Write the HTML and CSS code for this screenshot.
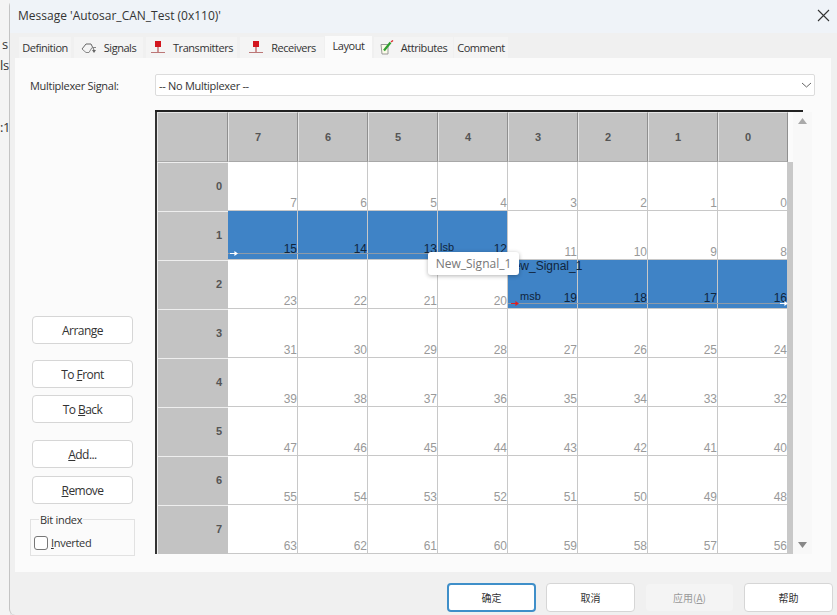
FILE: index.html
```html
<!DOCTYPE html>
<html lang="en">
<head>
    <meta charset="UTF-8">
    <title>Message 'Autosar_CAN_Test (0x110)'</title>
    <link rel="stylesheet" href="styles.css">
</head>
<body>
    <div class="behind">
        <span class="behind-a">s</span>
        <span class="behind-b">ls</span>
        <span class="behind-c">:1</span>
    </div>

    <div class="window">
        <div class="titlebar">
            <span class="title">Message 'Autosar_CAN_Test (0x110)'</span>
            <svg class="close" width="13" height="13" viewBox="0 0 13 13"><path d="M1 1l11 11M12 1L1 12" stroke="#333" stroke-width="1.1" fill="none"/></svg>
        </div>

        <div class="tabs">
            <div class="tab tab-definition">Definition</div>
            <div class="tab tab-signals">
                <svg width="16" height="12" viewBox="0 0 16 12"><path d="M1 7l4-5h5l3 6" stroke="#666" fill="none"/><path d="M1 7l4 3.5h3l3-5h4" stroke="#888" fill="none"/><path d="M11 8h4l-2 3z" fill="#666"/></svg>
                Signals
            </div>
            <div class="tab tab-transmitters">
                <svg width="16" height="13" viewBox="0 0 16 13"><rect x="5" y="0" width="6" height="6" fill="#d3161e"/><path d="M8 6v5" stroke="#a33" fill="none"/><path d="M1 11.5h14" stroke="#b77" fill="none"/></svg>
                Transmitters
            </div>
            <div class="tab tab-receivers">
                <svg width="16" height="13" viewBox="0 0 16 13"><rect x="5" y="0" width="6" height="6" fill="#d3161e"/><path d="M8 6v5" stroke="#a33" fill="none"/><path d="M1 11.5h14" stroke="#b77" fill="none"/></svg>
                Receivers
            </div>
            <div class="tab tab-layout active">Layout</div>
            <div class="tab tab-attributes">
                <svg width="14" height="15" viewBox="0 0 14 15"><path d="M1 4.5h7V14H2z" fill="#fbfbe8" stroke="#999"/><path d="M4 10.5l6.5-8" stroke="#2f9e2f" stroke-width="2.2" fill="none"/><path d="M11 2l2-1.5" stroke="#d33" stroke-width="1.5"/></svg>
                Attributes
            </div>
            <div class="tab tab-comment">Comment</div>
        </div>

        <div class="page">
            <div class="mux-row">
                <label class="mux-label">Multiplexer Signal:</label>
                <div class="combo">
                    <span>-- No Multiplexer --</span>
                    <svg width="11" height="6" viewBox="0 0 11 6"><path d="M1 1l4.5 4L10 1" stroke="#666" fill="none"/></svg>
                </div>
            </div>

            <div class="main">
                <div class="side">
                    <button class="btn btn-arrange">Arrange</button>
                    <button class="btn btn-front">To <u>F</u>ront</button>
                    <button class="btn btn-back">To <u>B</u>ack</button>
                    <button class="btn btn-add"><u>A</u>dd...</button>
                    <button class="btn btn-remove"><u>R</u>emove</button>
                    <fieldset class="bit-index">
                        <legend>Bit index</legend>
                        <label class="check"><span class="box"></span><span><u>I</u>nverted</span></label>
                    </fieldset>
                </div>

                <div class="grid-area">
                    <div class="top-line"></div>
                    <div class="grid-row">
                        <div class="grid" id="grid"></div>
                        <div class="strip"></div>
                        <div class="scrollbar">
                            <svg width="9" height="6" viewBox="0 0 9 6"><path d="M4.5 0L9 6H0z" fill="#aaa"/></svg>
                            <svg width="9" height="6" viewBox="0 0 9 6"><path d="M4.5 6L9 0H0z" fill="#888"/></svg>
                        </div>
                    </div>
                    <div class="tooltip">New_Signal_1</div>
                </div>
            </div>
        </div>

        <div class="footer">
            <button class="dlg dlg-default">确定</button>
            <button class="dlg">取消</button>
            <button class="dlg dlg-disabled">应用(<u>A</u>)</button>
            <button class="dlg">帮助</button>
        </div>
    </div>

    <script>
        // 8x8 bit table, header row first
        const grid = document.getElementById('grid');
        let html = '<div class="head corner"></div>';
        for (let c = 7; c >= 0; c--) {
            html += `<div class="head">${c}</div>`;
        }
        for (let r = 0; r < 8; r++) {
            html += `<div class="row-head">${r}</div>`;
            for (let c = 7; c >= 0; c--) {
                const bit = r * 8 + c;
                const on = bit >= 12 && bit <= 19;
                let extra = '';
                if (bit === 12) extra = '<span class="tag tag-lsb">lsb</span>';
                if (bit === 19) extra = '<span class="tag tag-name">New_Signal_1</span><span class="tag tag-msb">msb</span>';
                html += `<div class="cell${on ? ' on' : ''}">${extra}<span class="num">${bit}</span></div>`;
            }
        }
        grid.innerHTML = html;

        // signal lines with their start and end arrows
        const cells = grid.querySelectorAll('.cell');
        const line = (bit, cls) => {
            const el = document.createElement('div');
            el.className = cls;
            cells[(Math.floor(bit / 8)) * 8 + 7 - bit % 8].appendChild(el);
        };
        line(15, 'sig-line sig-line-a');
        line(19, 'sig-line sig-line-b');
    </script>
</body>
</html>
```

FILE: styles.css
```css
* {
    box-sizing: border-box;
}
html, body {
    height: 100%;
}
body {
    margin: 0;
    background-color: #e9e9e9;
    font-family: "Open Sans", "Noto Sans", sans-serif;
    font-size: 11px;
    letter-spacing: -0.3px;
    color: #333;
    overflow: hidden;
}
.behind {
    position: absolute;
    left: 0;
    top: 0;
    width: 10px;
    height: 615px;
    background-color: #f4f4f4;
    font-size: 13px;
}
.behind span {
    position: absolute;
}
.behind-a {
    left: 2px;
    top: 35px;
}
.behind-b {
    left: 0;
    top: 56px;
}
.behind-c {
    left: 0;
    top: 118px;
}
.window {
    position: absolute;
    left: 9px;
    top: 0;
    right: 0;
    bottom: 0;
    display: flex;
    flex-direction: column;
    background-color: #f0f0f0;
    border-left: 1px solid #c4c4c4;
    border-bottom-left-radius: 6px;
    border-top-left-radius: 6px;
}
.titlebar {
    height: 33px;
    flex: none;
    display: flex;
    align-items: center;
    justify-content: space-between;
    padding: 0 7px 3px 8px;
    background-color: #eff3f8;
}
.title {
    font-size: 12px;
    letter-spacing: 0;
}
.tabs {
    height: 25px;
    flex: none;
    display: flex;
    align-items: flex-end;
    padding-left: 9px;
    letter-spacing: -0.45px;
}
.tab {
    height: 21px;
    display: flex;
    align-items: center;
    gap: 7px;
    justify-content: center;
    background-color: #f4f4f4;
    white-space: nowrap;
}
.tab-definition { width: 52px; }
.tab-signals { width: 69px; margin-left: 3px; }
.tab-transmitters { width: 91px; margin-left: 3px; }
.tab-receivers { width: 84px; margin-left: 3px; }
.tab-layout { width: 47px; margin-left: 1px; }
.tab-attributes { width: 79px; margin-left: 2px; }
.tab-comment { width: 54px; margin-left: 1px; }
.tab.active {
    height: 22px;
    background-color: #fbfbfb;
    padding-bottom: 3px;
}
.page {
    height: 514px;
    flex: none;
    margin: 0 6px 0 5px;
    padding: 16px 0 0 15px;
    background-color: #fbfbfb;
    display: flex;
    flex-direction: column;
}
.mux-row {
    height: 22px;
    display: flex;
    align-items: center;
}
.mux-label {
    width: 125px;
}
.combo {
    width: 660px;
    height: 22px;
    display: flex;
    align-items: center;
    justify-content: space-between;
    padding: 0 2px 0 3px;
    background-color: #fff;
    border: 1px solid #dcdcdc;
    border-radius: 2px;
}
.main {
    margin-top: 14px;
    display: flex;
}
.side {
    width: 125px;
    height: 446px;
    padding-left: 2px;
    padding-top: 206px;
    display: flex;
    flex-direction: column;
    align-items: flex-start;
}
.btn {
    width: 101px;
    height: 28px;
    padding: 0;
    font: inherit;
    font-size: 12px;
    letter-spacing: -0.55px;
    color: #333;
    background-color: #fff;
    border: 1px solid #d6d6d6;
    border-radius: 4px;
}
.btn-front {
    margin-top: 16px;
}
.btn-back {
    margin-top: 7px;
}
.btn-add {
    margin-top: 17px;
}
.btn-remove {
    margin-top: 8px;
}
.bit-index {
    width: 105px;
    height: 44px;
    margin: 8px 0 0 -2px;
    padding: 0 0 0 3px;
    border: 1px solid #e2e2e2;
}
.bit-index legend {
    padding: 0 1px;
    margin-left: 5px;
}
.check {
    display: flex;
    align-items: center;
    gap: 3px;
    margin-top: 8px;
}
.box {
    width: 14px;
    height: 14px;
    background-color: #fff;
    border: 1px solid #777;
    border-radius: 3px;
}
.grid-area {
    position: relative;
    width: 660px;
}
.top-line {
    width: 648px;
    height: 2px;
    background-color: #222;
}
.grid-row {
    display: flex;
    height: 442px;
    border-left: 2px solid #333;
    width: 657px;
}
.grid {
    display: grid;
    grid-template-columns: 71px repeat(8, 70px);
    grid-template-rows: 50px repeat(8, 49px);
    width: 631px;
    background-color: #fff;
    letter-spacing: 0;
}
.head {
    display: flex;
    align-items: center;
    justify-content: center;
    padding: 0 10px 0 0;
    background-color: #c3c3c3;
    border: 1px solid #e6e6e6;
    border-right-color: #8f8f8f;
    border-bottom-color: #a8a8a8;
    color: #555;
    font-family: "Liberation Sans", sans-serif;
    font-size: 11px;
    font-weight: bold;
}
.row-head {
    display: flex;
    align-items: center;
    justify-content: flex-end;
    padding: 0 6px 2px 0;
    background-color: #c3c3c3;
    border-top: 1px solid #eee;
    border-left: 1px solid #eee;
    color: #555;
    font-family: "Liberation Sans", sans-serif;
    font-size: 11px;
    font-weight: bold;
}
.cell {
    position: relative;
    border-right: 1px solid #c8c8c8;
    border-bottom: 1px solid #c8c8c8;
    font-family: "Liberation Sans", sans-serif;
    font-size: 12px;
    color: #999;
}
.cell.on {
    background-color: #3f83c6;
    color: #10253d;
}
.num {
    position: absolute;
    right: 0;
    bottom: 0;
    line-height: 14px;
}
.on .num {
    bottom: 3px;
}
.tag {
    position: absolute;
    color: #10253d;
    white-space: nowrap;
    z-index: 2;
}
.tag-lsb {
    left: 2px;
    top: 30px;
    font-size: 11px;
}
.tag-name {
    left: -3px;
    top: -1px;
    font-size: 12px;
}
.tag-msb {
    left: 12px;
    top: 30px;
    font-size: 11px;
}
.sig-line {
    position: absolute;
    left: 0;
    height: 1px;
    background-color: #8d9aa8;
    z-index: 1;
}
.sig-line-a {
    width: 279px;
    bottom: 5px;
}
.sig-line-b {
    width: 280px;
    bottom: 4px;
}
.sig-line-a::before,
.sig-line-b::before,
.sig-line-b::after {
    content: "";
    position: absolute;
    top: -2px;
    width: 8px;
    height: 5px;
    background-color: #fff;
    clip-path: polygon(0 40%, 55% 40%, 55% 0, 100% 50%, 55% 100%, 55% 60%, 0 60%);
}
.sig-line-a::before {
    left: 2px;
}
.sig-line-b::before {
    left: 3px;
    background-color: #e02020;
}
.sig-line-b::after {
    right: 0;
}
.strip {
    width: 5px;
    margin-top: 50px;
    background-color: #c8c8c8;
}
.scrollbar {
    width: 19px;
    display: flex;
    flex-direction: column;
    justify-content: space-between;
    align-items: center;
    padding: 6px 0;
    background-color: #f8f8f8;
}
.tooltip {
    position: absolute;
    left: 273px;
    top: 142px;
    width: 91px;
    height: 23px;
    z-index: 3;
    display: flex;
    align-items: center;
    justify-content: center;
    background-color: #fff;
    border-radius: 3px;
    box-shadow: 0 1px 4px rgba(0, 0, 0, 0.3);
    color: #777;
    font-size: 12px;
    letter-spacing: 0;
}
.footer {
    flex: 1;
    display: flex;
    justify-content: flex-end;
    align-items: flex-start;
    gap: 10px;
    padding: 11px 4px 0 0;
}
.dlg {
    width: 89px;
    height: 29px;
    padding: 0;
    font-family: "Noto Sans CJK SC", sans-serif;
    font-size: 10px;
    color: #333;
    background-color: #fff;
    border: 1px solid #d6d6d6;
    border-radius: 4px;
}
.dlg-default {
    border: 2px solid #3f8fc9;
}
.dlg-disabled {
    background-color: #f4f4f4;
    border-color: #f0f0f0;
    color: #999;
}
```
